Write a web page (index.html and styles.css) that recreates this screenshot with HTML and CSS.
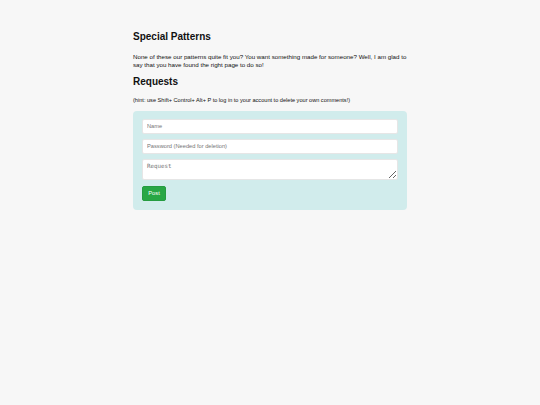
FILE: index.html
```html
<!DOCTYPE html>
<html>
<head>
<meta charset="utf-8">
<link rel="stylesheet" href="styles.css">
</head>
<body>
<main class="container">
  <h1 class="title">Special Patterns</h1>
  <p class="intro">None of these our patterns quite fit you? You want something made for someone? Well, I am glad to say that you have found the right page to do so!</p>
  <h2 class="title">Requests</h2>
  <p class="hint">(hint: use Shift+ Control+ Alt+ P to log in to your account to delete your own comments!)</p>
  <form class="panel">
    <input class="field" type="text" placeholder="Name">
    <input class="field" type="password" placeholder="Password (Needed for deletion)">
    <textarea class="field area" placeholder="Request"></textarea>
    <div class="actions"><button class="post" type="button">Post</button></div>
  </form>
</main>
</body>
</html>
```
FILE: styles.css
```css
html, body {
  margin: 0;
  padding: 0;
  background: #f7f7f7;
}
body {
  font-family: "Liberation Sans", Arial, sans-serif;
  color: #111;
}
.container {
  width: 274px;
  margin: 0 auto;
  padding-top: 31px;
}
.title {
  font-size: 10px;
  font-weight: bold;
  line-height: 12px;
  margin: 0;
}
.intro {
  font-size: 6.2px;
  line-height: 7.5px;
  margin: 10px 0 8px;
}
.hint {
  font-size: 5.6px;
  line-height: 6.5px;
  margin: 9px 0 7px;
}
.panel {
  background: #d1ecec;
  border-radius: 4px;
  padding: 8px 9px 9px;
  display: flex;
  flex-direction: column;
  gap: 5px;
}
.field {
  box-sizing: border-box;
  width: 256px;
  height: 15px;
  margin: 0;
  border: 1px solid #e6e6e6;
  border-radius: 2px;
  background: #fff;
  padding: 0 4px;
  font-family: "Liberation Sans", Arial, sans-serif;
  font-size: 5.7px;
  outline: none;
}
.field::placeholder {
  color: #757575;
}
.area {
  height: 21px;
  padding: 3px 4px;
  font-family: "DejaVu Sans Mono", monospace;
  font-size: 5.8px;
  resize: vertical;
}
.actions {
  display: flex;
  margin-top: 1px;
}
.post {
  width: 24px;
  height: 15px;
  padding: 0;
  border: 1px solid #259c41;
  border-radius: 2px;
  background: #28a745;
  color: #fff;
  font-family: "Liberation Sans", Arial, sans-serif;
  font-size: 5.8px;
}
```
